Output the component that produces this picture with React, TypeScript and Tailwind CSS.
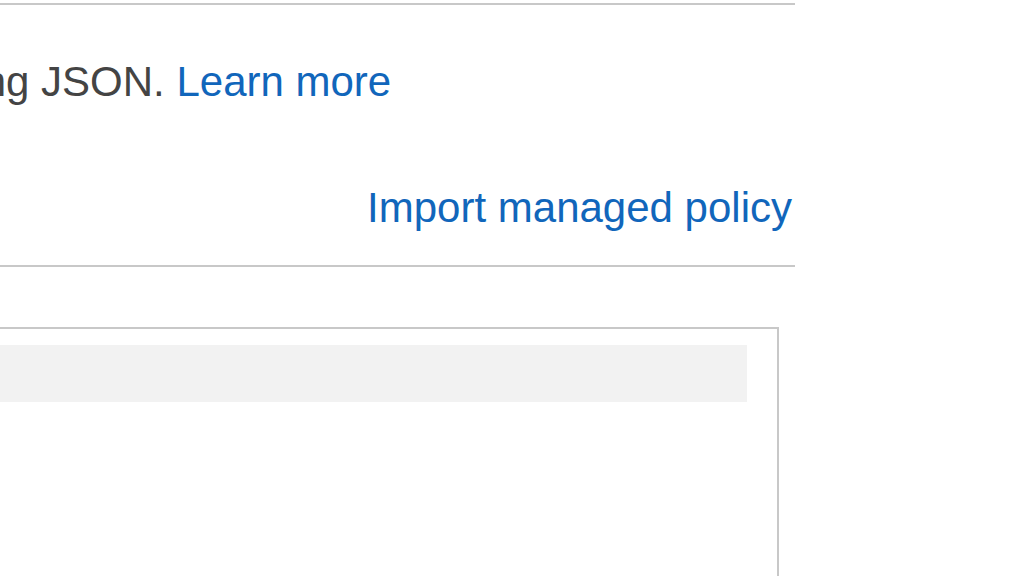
import React from 'react';

export default function App() {
  return (
    <div className="w-[1024px] h-[576px] overflow-hidden bg-white font-['Liberation_Sans',Arial,sans-serif]">
      <div className="ml-[-200px] w-[995px] pt-[3px]">
        {/* Editor header */}
        <div className="border-t-2 border-[#c8c8c8]">
          <p className="mt-[53px] ml-[129px] whitespace-nowrap text-[42px] leading-[48px] text-[#444444]">
            using JSON.{' '}
            <a href="#" className="text-[#1166bb]">
              Learn more
            </a>
          </p>
          <div className="mt-[78px] pr-[3px] text-right text-[42px] leading-[48px]">
            <a href="#" className="text-[#1166bb]">
              Import managed policy
            </a>
          </div>
          <div className="mt-[33px] border-t-2 border-[#c8c8c8]" />
        </div>

        {/* Policy editor box */}
        <div className="mt-[60px] w-[979px] h-[400px] border-2 border-[#c8c8c8] pt-[16px] pr-[30px]">
          <div className="h-[57px] bg-[#f2f2f2]" />
        </div>
      </div>
    </div>
  );
}
